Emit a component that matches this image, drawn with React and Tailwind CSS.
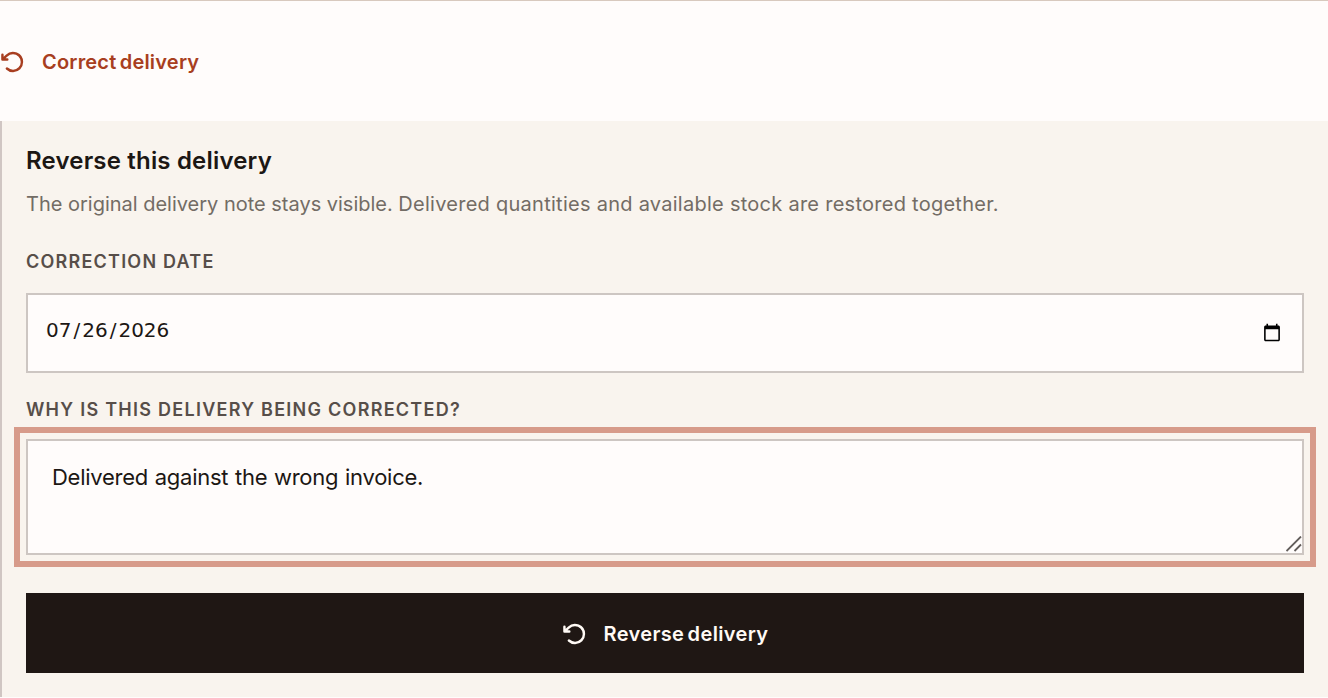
import { useState } from "react";
import { PiArrowCounterClockwiseBold } from "react-icons/pi";

const App = () => {
    const [date, setDate] = useState("2026-07-26");
    const [reason, setReason] = useState("Delivered against the wrong invoice.");

    return (
        <div className="h-[698px] overflow-hidden border-t border-[#d8c9be] bg-[#fffcfb] font-['Inter',sans-serif] text-[#1c1714]">
            <button className="flex h-[120px] w-full items-center gap-4 pt-px text-[20px] font-semibold text-[#a83e20]">
                <PiArrowCounterClockwiseBold className="size-[26px] shrink-0" />
                <span className="tracking-[0.2px] [word-spacing:-2px] whitespace-nowrap">Correct delivery</span>
            </button>
            <form className="flex h-[576px] flex-col border-l-2 border-[#d0c6c3] bg-[#f9f4ee] pr-6 pl-6">
                <h2 className="mt-6 h-8 text-[24px] leading-8 font-semibold tracking-[0.18px] whitespace-nowrap">
                    Reverse this delivery
                </h2>
                <p className="mt-[11px] h-8 text-[20px] leading-8 whitespace-nowrap text-[#736c65]">
                    <span className="tracking-[-0.01px]">The original delivery note stays visible. </span>
                    <span className="tracking-[0.265px]">Delivered quantities and available stock are restored together.</span>
                </p>
                <label htmlFor="date" className="mt-7 h-7 text-[18px] leading-7 font-semibold tracking-[1.22px] whitespace-nowrap text-[#574e49] uppercase">
                    Correction date
                </label>
                <input
                    id="date"
                    type="date"
                    value={date}
                    onChange={(e) => setDate(e.target.value)}
                    className="mt-[17px] h-20 w-full border-2 border-[#cdc6c2] bg-[#fffcfb] pr-[18px] pb-1.5 pl-4 font-['DejaVu_Sans',sans-serif] text-[20px] outline-none [&::-webkit-calendar-picker-indicator]:translate-y-[3px] [&::-webkit-datetime-edit-day-field]:px-0.5 [&::-webkit-datetime-edit-month-field]:px-0.5 [&::-webkit-datetime-edit-year-field]:px-0.5"
                />
                <label htmlFor="reason" className="mt-[23px] h-7 text-[18px] leading-7 font-semibold tracking-[1.26px] whitespace-nowrap text-[#574e49] uppercase">
                    Why is this delivery being corrected?
                </label>
                <div className="relative mt-[15px] h-[116px]">
                    <textarea
                        id="reason"
                        value={reason}
                        onChange={(e) => setReason(e.target.value)}
                        className="block h-full w-full resize-none border-2 border-[#cdc6c2] bg-[#fffcfb] px-6 py-[18px] text-[22px] leading-9 tracking-[-0.26px] [word-spacing:0.8px] outline-6 outline-offset-6 outline-[#d79b8a]"
                    />
                    <svg className="absolute right-[2px] bottom-[3px] size-4" viewBox="0 0 16 16" stroke="#625d5b" strokeWidth="1.8" fill="none">
                        <path d="M.5 15 15 .5M8.5 15 15 8.5" />
                    </svg>
                </div>
                <button type="button" className="mt-[38px] flex h-20 items-center justify-center gap-4 bg-[#1f1714] pt-0.5 text-[20px] font-semibold text-[#fffaf5]">
                    <PiArrowCounterClockwiseBold className="size-[26px] shrink-0" />
                    <span className="tracking-[0.36px] [word-spacing:-2px] whitespace-nowrap">Reverse delivery</span>
                </button>
            </form>
        </div>
    );
};

export default App;
